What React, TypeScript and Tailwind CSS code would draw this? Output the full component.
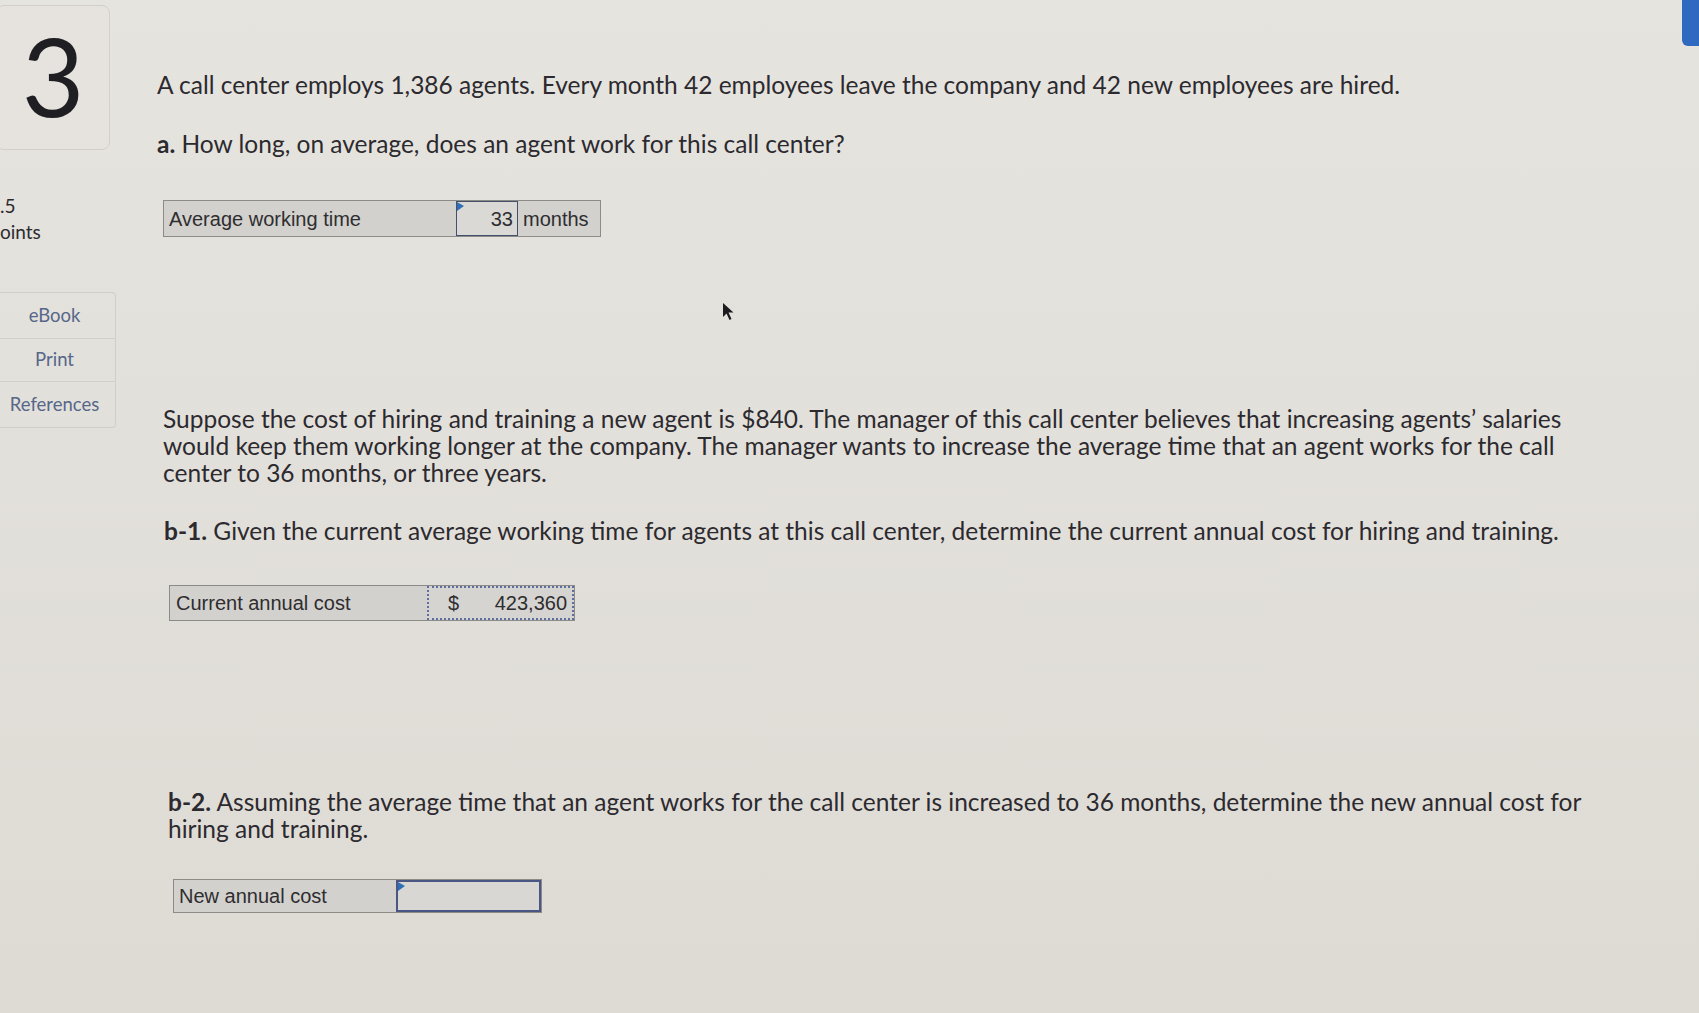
import React from 'react'

const body = "font-['Lato','Open_Sans',sans-serif] text-[#2c2a2f]"
const cell = "font-['Liberation_Sans',Arial,sans-serif] text-[20px] text-[#2e2d30]"

function Flag() {
  return (
    <svg className="absolute left-0 top-0" width="7" height="10" viewBox="0 0 7 10">
      <path d="M0 0 L7 4 L0 9 Z" fill="#2f6fb8" />
    </svg>
  )
}

function Sidebar() {
  return (
    <div className="w-[118px] shrink-0 pt-[5px]">
      <div className="ml-[-4px] flex h-[145px] w-[114px] items-center justify-center rounded-lg border border-[#d3d0cb] bg-[#e6e3de] pb-[6px]">
        <span className="font-['Lato',sans-serif] text-[108px] font-normal leading-none text-[#1f1e22]">3</span>
      </div>
      <div className="mt-[43px] font-['Lato',sans-serif] text-[19px] leading-[26px] text-[#2c2a2f]">
        <div>.5</div>
        <div>oints</div>
      </div>
      <div className="mt-[47px] w-[116px] font-['Lato',sans-serif] text-[18.5px] text-[#566789]">
        <div className="flex h-[47px] items-center justify-center rounded-tr border border-l-0 border-[#d2cfca] pr-[6px]">eBook</div>
        <div className="flex h-[43px] items-center justify-center border border-l-0 border-t-0 border-[#d2cfca] pr-[6px]">Print</div>
        <div className="flex h-[46px] items-center justify-center rounded-br border border-l-0 border-t-0 border-[#d2cfca] pr-[6px]">References</div>
      </div>
    </div>
  )
}

export default function App() {
  return (
    <div className="relative h-[1013px] w-[1699px] overflow-hidden bg-gradient-to-b from-[#e6e4df] to-[#dedbd5]">
      <div className="absolute right-0 top-0 h-[46px] w-[17px] rounded-bl-md bg-[#2f69c0]" />
      <svg className="absolute left-[722px] top-[302px]" width="14" height="20" viewBox="0 0 14 20">
        <path d="M1 1 L1 15 L4.5 11.5 L7.5 18 L9.5 17 L6.5 10.5 L11.5 10.5 Z" fill="#1c1b20" />
      </svg>

      <div className="flex">
        <Sidebar />

        <div className={`${body} flex-1 pl-[39px]`}>
          <p className="mt-[71px] text-[24.5px] leading-[28px]">
            A call center employs 1,386 agents. Every month 42 employees leave the company and 42 new employees are hired.
          </p>
          <p className="mt-[31px] text-[24.5px] leading-[28px]">
            <span className="font-bold">a.</span> How long, on average, does an agent work for this call center?
          </p>

          <div className={`${cell} ml-[6px] mt-[42px] flex h-[37px] w-[438px] border border-[#8d8b88] bg-[#d3d1cd]`}>
            <div className="flex w-[292px] items-center pl-[5px]">Average working time</div>
            <div className="relative flex w-[62px] items-center justify-end border border-[#45506d] bg-[#dbd9d5] pr-[4px]">
              <Flag />
              33
            </div>
            <div className="flex flex-1 items-center pl-[5px]">months</div>
          </div>

          <p className="ml-[6px] mt-[168px] text-[24.5px] leading-[27px]">
            Suppose the cost of hiring and training a new agent is $840. The manager of this call center believes that increasing agents’ salaries
            <br />
            would keep them working longer at the company. The manager wants to increase the average time that an agent works for the call
            <br />
            center to 36 months, or three years.
          </p>

          <p className="ml-[7px] mt-[31px] text-[24.5px] leading-[27px]">
            <span className="font-bold">b-1.</span> Given the current average working time for agents at this call center, determine the current annual cost for hiring and training.
          </p>

          <div className={`${cell} ml-[12px] mt-[41px] flex h-[36px] w-[406px] border border-[#8d8b88] bg-[#d3d1cd]`}>
            <div className="flex w-[257px] items-center pl-[6px]">Current annual cost</div>
            <div className="flex flex-1 items-center border-2 border-dotted border-[#5d6fa0] bg-[#d6d4d0] pl-[19px] pr-[5px]">
              <span>$</span>
              <span className="ml-auto">423,360</span>
            </div>
          </div>

          <p className="ml-[11px] mt-[167px] text-[24.5px] leading-[27px]">
            <span className="font-bold">b-2.</span> Assuming the average time that an agent works for the call center is increased to 36 months, determine the new annual cost for
            <br />
            hiring and training.
          </p>

          <div className={`${cell} ml-[16px] mt-[37px] flex h-[34px] w-[369px] border border-[#8d8b88] bg-[#d3d1cd]`}>
            <div className="flex w-[222px] items-center pl-[5px]">New annual cost</div>
            <div className="relative flex-1 border-2 border-[#4a5785] bg-[#d9d7d3]">
              <Flag />
            </div>
          </div>
        </div>
      </div>
    </div>
  )
}
